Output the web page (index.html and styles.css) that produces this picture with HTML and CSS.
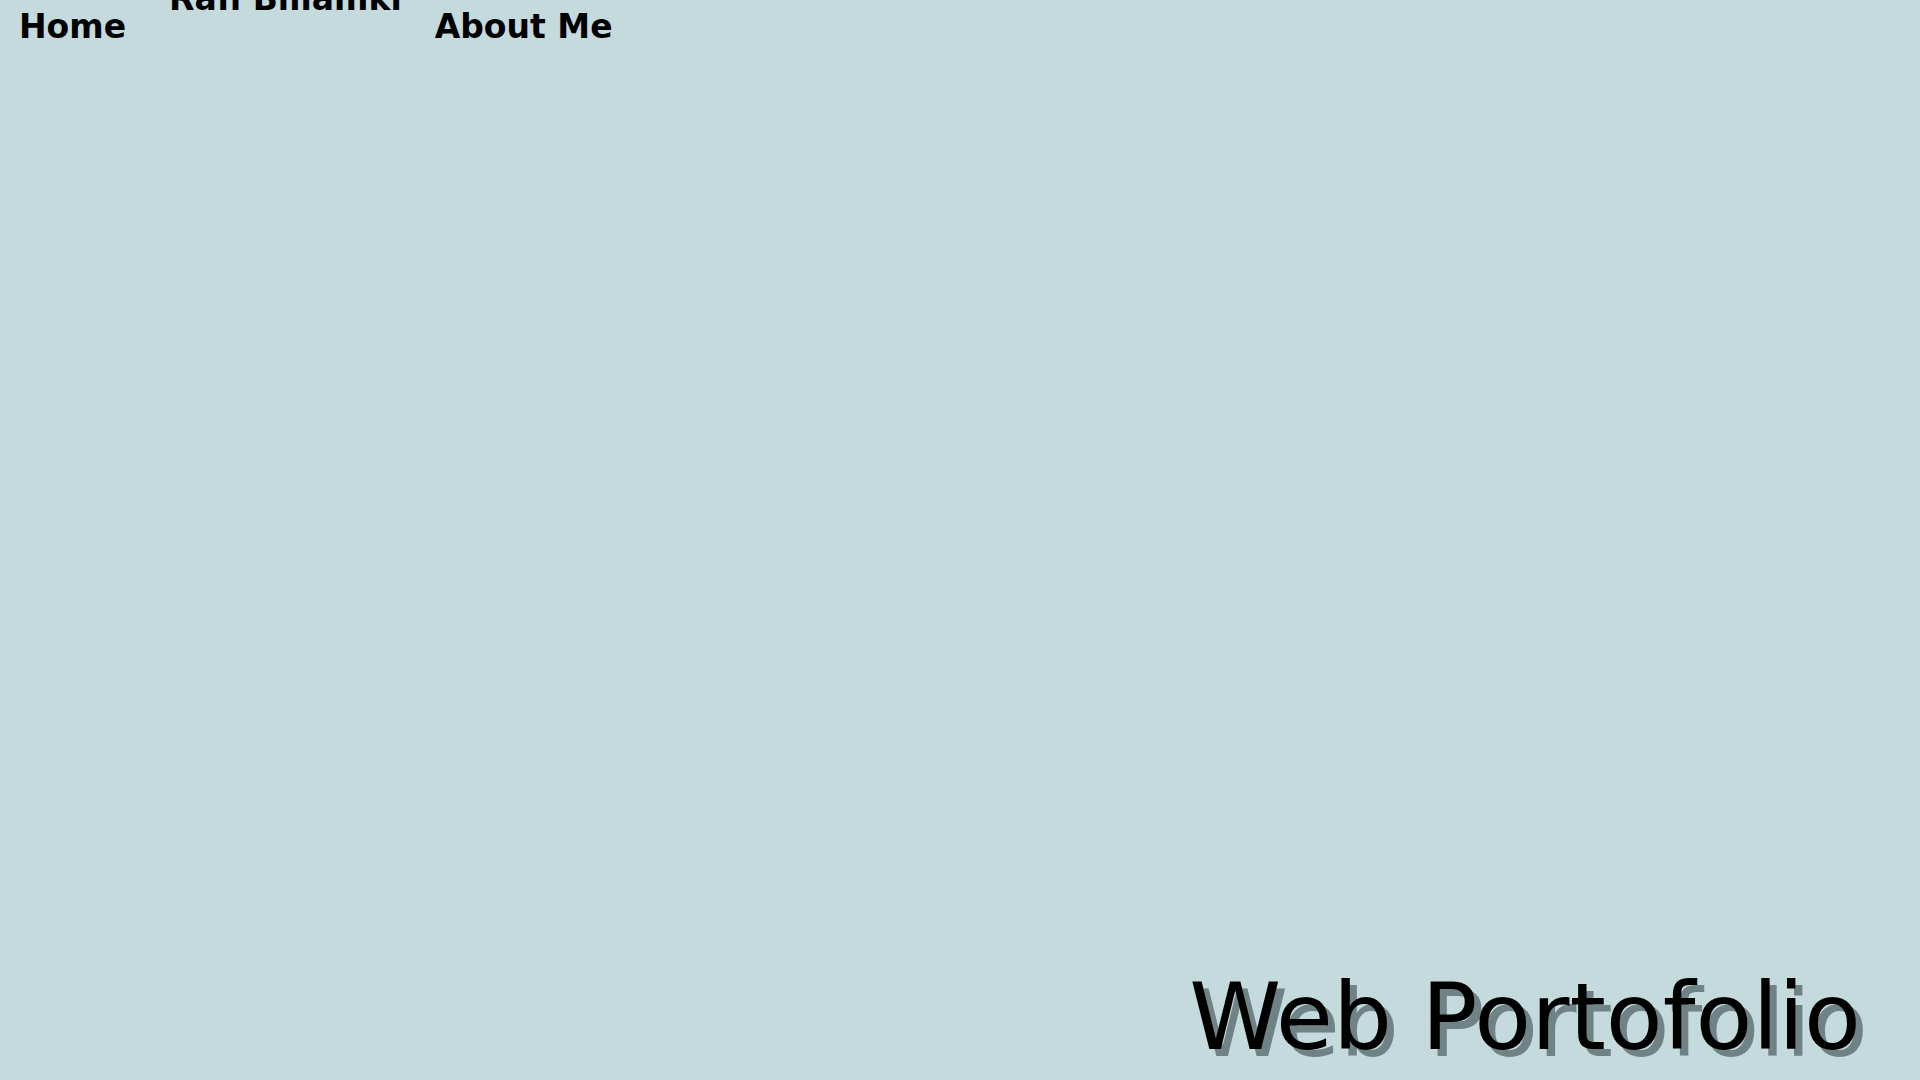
FILE: index.html
```html
<!DOCTYPE html>
<html lang="en">
<head>
<meta charset="utf-8">
<title>Web Portofolio</title>
<link rel="stylesheet" href="styles.css">
</head>
<body>
<div class="page">
  <nav class="nav">
    <a class="nav-link" href="#">Home</a>
    <a class="nav-brand" href="#">Rafi Billamki</a>
    <a class="nav-link" href="#">About Me</a>
  </nav>
  <main class="hero">
    <h1 class="hero-title">Web Portofolio</h1>
  </main>
</div>
</body>
</html>
```
FILE: styles.css
```css
html, body {
  margin: 0;
  padding: 0;
  height: 100%;
}
body {
  background: #c4dadd;
  font-family: "DejaVu Sans", "Open Sans", sans-serif;
  color: #000;
  overflow: hidden;
}
.page {
  height: 100vh;
  display: flex;
  flex-direction: column;
}
.nav {
  display: flex;
  align-items: flex-start;
  padding: 0 0 0 19px;
  height: 60px;
}
.nav a {
  color: #000;
  text-decoration: none;
  font-weight: bold;
  font-size: 33px;
  line-height: 1;
}
.nav-link {
  padding-top: 10px;
}
.nav-brand {
  margin: -18px 33px 0 43px;
}
.hero {
  flex: 1;
  display: flex;
  flex-direction: column;
  justify-content: flex-end;
  align-items: flex-end;
  padding: 0 59px 16px 0;
}
.hero-title {
  margin: 0;
  font-weight: normal;
  font-size: 93px;
  line-height: 1;
  text-shadow: 7px 7px 0 #6f8285;
}
```
